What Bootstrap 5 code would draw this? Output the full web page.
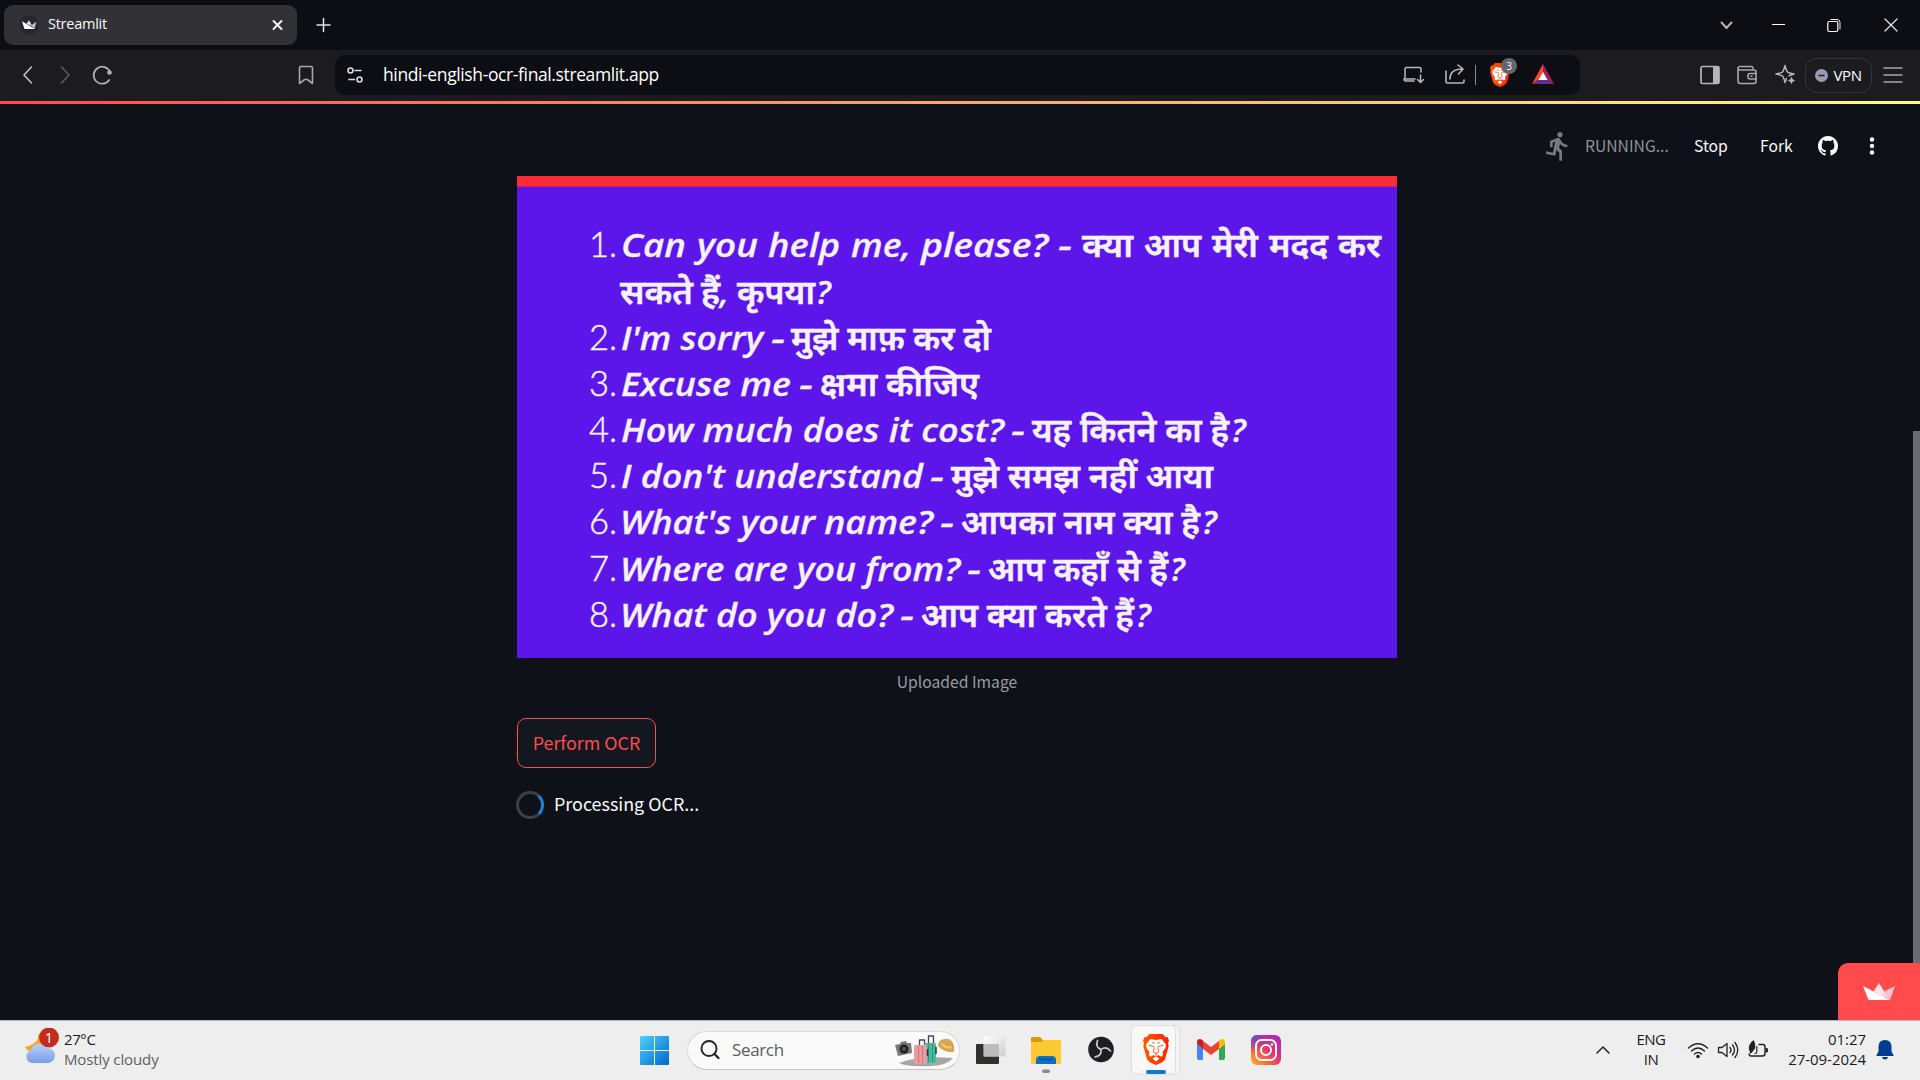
<!DOCTYPE html>
<html lang="en">
<head>
<meta charset="utf-8">
<title>Streamlit</title>
<link href="https://cdn.jsdelivr.net/npm/bootstrap@5.3.0/dist/css/bootstrap.min.css" rel="stylesheet">
<style>
html,body{height:100%;overflow:hidden}
body{background:#0e1117;color:#fafafa;font-family:"Noto Sans CJK SC","Noto Sans",sans-serif;width:1920px;height:1080px}
svg{display:block;flex:none}
.st{fill:none;stroke-linecap:round;stroke-linejoin:round}
.seg{font-family:"Open Sans","Noto Sans",sans-serif}
.tabstrip{height:50px;background:#0d0e13}
.tabitem{width:293px;height:40px;margin:5px 0 0 4px;background:#323135;border-radius:9px;padding:0 9px 0 15px;font-size:14.5px}
.tabname{margin-left:9px;margin-bottom:2px;letter-spacing:-.25px}
.winbtns{padding-right:19px;gap:33px}
.toolbar{height:51px;background:#1c1b20;padding-left:16px;padding-bottom:1px}
.urlbar{width:1245px;height:40px;background:#0d0e13;border-radius:10px;margin-left:17px;padding:0 25px 0 8px}
.urltext{font-size:17.5px;margin-left:16px;margin-bottom:2px;letter-spacing:-.38px;color:#fff}
.shield{margin-left:12px}
.countbadge{left:13px;top:-5px;width:16px;height:16px;border-radius:50%;background:#63646f;font-size:10px;line-height:16px}
.vpn{width:67px;height:35px;border:1px solid #35343b;border-radius:11px;margin-left:8px;font-size:15px;gap:5px}
.stripe{height:3px;background:linear-gradient(90deg,#ff4b4b,#fffd80)}
.appview{height:916px}
.apphead{height:72px;padding:12px 38px 0 0;font-size:15.7px;line-height:1}
.running{color:#8f939d;width:113px}
.block{width:880px;margin-left:517px}
.caption{font-size:15.7px;line-height:20px;color:#9a9ca1;margin-top:14px}
.ocrbtn{width:139px;height:50px;margin-top:26px;border:1px solid #ff4b4b;border-radius:9px;background:#131720;color:#ff4b4b;font-size:17.9px;padding:0 0 2px}
.ocrbtn:hover{border-color:#ff4b4b;color:#ff4b4b}
.spinrow{margin-top:22px;height:30px;font-size:17.9px;gap:10px}
.ring{width:28px;height:28px;border-radius:50%;border:3px solid #3d4048;border-right-color:#1c83e1;margin-left:-1px}
.scrollthumb{right:0;top:431px;width:7px;height:589px;background:#6b6c71}
.hostbadge{right:0;top:963px;width:82px;height:57px;background:#ff4b4b;border-top-left-radius:10px}
.taskbar{height:60px;background:#eee;border-top:1px solid #b9b9bb;color:#1b1b1b;font-size:15px;line-height:20px;padding-bottom:1px}
.weather{margin-left:24px;width:616px}
.traytxt{padding-bottom:2px}
.find{width:273px;height:39px;background:#fafafa;border:1px solid #dadada;border-bottom-color:#c4c4c4;border-radius:20px;margin-left:18px;padding:0 4px 0 12px;font-size:17px;color:#5c5c5c}
.tiles{margin-left:14px}
.hi{font-family:"Noto Sans Devanagari","Noto Sans",sans-serif;font-weight:600;font-size:33px;stroke:#f6f1ff;stroke-width:.5px}
.en{font-family:"Open Sans","Noto Sans",sans-serif;font-weight:600;font-style:italic;font-size:33px;stroke:#f6f1ff;stroke-width:.3px}
.no{font-family:Lato,sans-serif;font-weight:300;font-size:34.5px;stroke:#f6f1ff;stroke-width:.5px}
</style>
<script src="https://cdn.jsdelivr.net/npm/bootstrap@5.3.0/dist/js/bootstrap.bundle.min.js"></script>
</head>
<body class="d-flex flex-column position-relative">
<svg width="0" height="0" class="position-absolute">
 <defs>
  <linearGradient id="lg" x1="0" x2="1"><stop offset="0" stop-color="#ff5a00"/><stop offset="1" stop-color="#ff2000"/></linearGradient>
  <symbol id="lion" viewBox="0 0 26 31">
   <path fill="url(#lg)" d="M6.500 0h13l3 3.200 2-.2L26 6.600l-1 3 .7 2.400-3.800 13.500-3 3L13 31l-5.900-2.500-3-3L.3 12 1 9.600l-1-3L1.500 3l2 .2z"/>
   <path fill="#fff" d="M7.500 5l5.500 1 5.500-1 4.500 5.600-.5 3.400-3 4.300.7 2.700-2.200 1.800-2.500-1.700L13 22.500l-2.500-1.400L8 22.800 5.800 21l.7-2.700L3.500 14 3 10.600zM9.500 24.500l3.500-2 3.500 2-3.500 3z"/>
   <path class="st" stroke="#ff4310" stroke-width=".9" d="M6 11.500l4.500.7.700 1.700-1 4 2.800 1.600 2.800-1.600-1-4 .7-1.700 4.500-.7M13 19.500V22M9.500 8.700l2 .4M16.500 8.700l-2 .4"/>
  </symbol>
  <symbol id="crown" viewBox="0 0 32 17">
   <path fill="#fff" d="M0 3l27 14H5.500z"/><path fill="#ffe3e8" d="M16 0l8.500 13.500L21 14 10.500 8.500z"/><path fill="#ffc3cd" d="M32 3l-5 14-5-9z"/><path fill="#ffd5dc" d="M22 8l5 9-8-5z"/>
  </symbol>
 </defs>
</svg>

<!-- Tab strip -->
<header class="tabstrip d-flex flex-none seg">
 <div class="tabitem d-flex align-items-center">
  <svg width="20" height="20" viewBox="0 0 20 20"><circle cx="10" cy="10" r="9.800" fill="#262631"/><path fill="#fff" d="M3 6.300L16 14H5.500z"/><path fill="#e3e3e3" d="M10 5.300l3.500 6-6-2.500z"/><path fill="#bbb" d="M17.500 6.500L15.500 14 12 10.500z"/></svg>
  <span class="tabname">Streamlit</span>
  <svg class="ms-auto" width="20" height="20"><path class="st" stroke="#f4f4f4" stroke-width="1.900" d="M5.500 6l8 8m0-8l-8 8"/></svg>
 </div>
 <svg class="ms-3" width="20" height="50"><path class="st" stroke="#e4e4e6" stroke-width="1.500" d="M10.500 18.500v13M4 25h13"/></svg>
 <div class="winbtns ms-auto d-flex align-items-center">
  <svg width="24" height="24"><path class="st" stroke="#b5b5b8" stroke-width="2" d="M7.500 9.500l5 5.500 5-5.500"/></svg>
  <svg width="20" height="24"><path stroke="#fff" d="M1 11.500h13"/></svg>
  <svg width="24" height="24"><path class="st" stroke="#eee" d="M7 6.500h6a3 3 0 0 1 3 3V16"/><rect x="3.800" y="8.500" width="10" height="10" rx="1.500" fill="none" stroke="#fff" stroke-width="1.200"/></svg>
  <svg width="20" height="24"><path class="st" stroke="#e8e8e8" stroke-width="1.200" d="M4 6l12 12m0-12L4 18"/></svg>
 </div>
</header>

<!-- Address toolbar -->
<nav class="toolbar d-flex align-items-center seg" aria-label="Browser">
 <svg width="24" height="24"><path class="st" stroke="#c4c4c8" stroke-width="1.600" d="M15.500 4L8 12l7.500 8"/></svg>
 <svg width="24" height="24" style="margin-left:13px"><path class="st" stroke="#5a5a60" stroke-width="1.600" d="M8.500 4l7.500 8-7.500 8"/></svg>
 <svg width="24" height="24" style="margin-left:13px"><path class="st" stroke="#b2b2b6" stroke-width="1.700" d="M20 9a8.500 8.500 0 1 0-.8 8"/><circle cx="19.500" cy="9.500" r="2.300" fill="#b2b2b6"/></svg>
 <svg width="24" height="24" style="margin-left:180px"><path class="st" stroke="#a6a6ab" stroke-width="1.600" d="M5.500 5q0-1.500 1.500-1.500h10q1.500 0 1.500 1.500v15.500l-4.500-3.500q-2-1.500-4 0l-4.500 3.500z"/></svg>
 <div class="urlbar d-flex align-items-center">
  <svg width="24" height="24"><g class="st" stroke="#dcdce0" stroke-width="1.600"><circle cx="7.500" cy="7.500" r="2.500"/><path d="M12 7.500h6M6 16.500h5.500"/><circle cx="16.500" cy="16.500" r="2.500"/></g></svg>
  <span class="urltext">hindi-english-ocr-final.streamlit.app</span>
  <svg class="ms-auto" width="24" height="24"><path class="st" stroke="#b8b8bc" stroke-width="1.500" d="M20 9V6q0-1.500-1.500-1.500h-13Q4 4.500 4 6v10M13 18H4.500q-1.500 0-1.500-2h11M19.500 12v7.500m-3-3l3 3 3-3"/></svg>
  <svg width="24" height="24" style="margin-left:18px"><path class="st" stroke="#b8b8bc" stroke-width="1.600" d="M3 8v10.500Q3 20 4.500 20h15q1.500 0 1.500-1.500V17M7 16c0-6 4-10 12.500-10M15 2l5 4-4.500 5"/></svg>
  <svg width="1" height="20" style="margin-left:8px"><path stroke="#8c8c90" d="M.5 0v20"/></svg>
  <span class="shield position-relative"><svg width="22" height="24"><use href="#lion" x="2" y="0" width="20" height="24"/></svg><span class="countbadge position-absolute text-center">3</span></span>
  <svg width="24" height="24" style="margin-left:21px"><path fill="#ff4724" d="M12 1v8.500L7.500 17 1 21z"/><path fill="#9e1f63" d="M12 1l11 20-6.500-4L12 9.500z"/><path fill="#662d91" d="M1 21l6.500-4h9l6.500 4z"/><path fill="#fff" d="M12 9l4.600 8H7.400z"/></svg>
 </div>
 <svg width="24" height="24" style="margin-left:118px"><rect x="3" y="3.500" width="18" height="17" rx="1.500" class="st" stroke="#b5b5b9" stroke-width="1.700"/><path fill="#b5b5b9" d="M15 3h6v18h-6z"/></svg>
 <svg width="24" height="24" style="margin-left:13px"><g class="st" stroke="#a8a8ad" stroke-width="1.600"><path d="M3 5.500V18q0 2.500 2.500 2.500H19q2 0 2-2V9q0-2-2-2H5Q3 7 3 5.300q0-1.800 2-1.800h11q2 0 2 2"/><path d="M21 10.500h-6q-2 0-2 2v1.500q0 2 2 2h6M16 13.300h1"/></g></svg>
 <svg width="24" height="24" style="margin-left:14px"><path class="st" stroke="#b5b5b9" stroke-width="1.500" d="M12 2.500q1.500 5.500 2.500 6.500t6.500 2q-4 1-5 1.800M12 2.500Q10.500 8 9.500 9T3 11q5.500 1 6.500 2T12 19.500q.8-2 1.300-4"/><path fill="#b5b5b9" d="M18.500 13.500q.7 3.300 4 4-3.300.7-4 4-.7-3.300-4-4 3.300-.7 4-4z"/></svg>
 <div class="vpn d-flex align-items-center justify-content-center text-white"><svg width="13" height="13"><circle cx="6.500" cy="6.500" r="6.500" fill="#9a9cb5"/><path stroke="#1c1b20" stroke-width="1.500" d="M3.500 6.500h6"/></svg><span style="letter-spacing:-.4px">VPN</span></div>
 <svg width="24" height="24" style="margin-left:9px"><path class="st" stroke="#a6a6ab" stroke-width="1.500" d="M3 5h18M3 12h18M3 19h18"/></svg>
</nav>
<div class="stripe"></div>

<!-- Application -->
<main class="appview">
 <div class="apphead d-flex align-items-center justify-content-end">
  <svg width="32" height="32" viewBox="0 0 24 24" style="margin-right:-1px"><path fill="#77797e" d="M13.490 5.480c1.100 0 2-.9 2-2s-.9-2-2-2-2 .9-2 2 .9 2 2 2zm-3.600 13.900l1-4.400 2.100 2v6h2v-7.500l-2.100-2 .6-3c1.300 1.500 3.300 2.500 5.500 2.500v-2c-1.900 0-3.500-1-4.300-2.400l-1-1.600c-.4-.6-1-1-1.700-1-.3 0-.5.1-.8.1l-5.200 2.200v4.700h2v-3.400l1.800-.7-1.600 8.100-4.900-1-.4 2 7 1.400z"/></svg>
  <span class="running ms-2 ps-1">RUNNING...</span>
  <span style="width:66px">Stop</span>
  <span style="width:58px">Fork</span>
  <svg width="20" height="20" viewBox="0 0 16 16"><path fill="#fff" d="M8 0C3.580 0 0 3.580 0 8c0 3.540 2.290 6.530 5.470 7.590.4.070.55-.17.55-.38 0-.19-.01-.82-.01-1.490-2.010.37-2.530-.49-2.690-.94-.09-.23-.48-.94-.82-1.130-.28-.15-.68-.52-.01-.53.630-.01 1.080.58 1.230.82.720 1.210 1.870.87 2.330.66.070-.52.280-.87.510-1.070-1.780-.2-3.640-.89-3.640-3.950 0-.87.310-1.590.82-2.150-.08-.2-.36-1.020.08-2.120 0 0 .67-.21 2.200.82.640-.18 1.320-.27 2-.27s1.360.09 2 .27c1.530-1.040 2.200-.82 2.200-.82.440 1.100.16 1.920.08 2.120.51.56.82 1.270.82 2.150 0 3.070-1.870 3.750-3.650 3.950.29.250.54.730.54 1.480 0 1.070-.01 1.930-.01 2.200 0 .21.150.46.550.38A8.010 8.010 0 0 0 16 8c0-4.420-3.580-8-8-8z"/></svg>
  <svg width="20" height="24" style="margin-left:24px"><g fill="#fff"><circle cx="10" cy="5.500" r="2.200"/><circle cx="10" cy="12" r="2.200"/><circle cx="10" cy="18.500" r="2.200"/></g></svg>
 </div>
 <div class="block">
  <svg width="880" height="482" viewBox="517 176 880 482" role="img" aria-label="Uploaded Image">
   <rect x="517" y="176" width="880" height="482" fill="#5c16e9"/><rect x="517" y="176" width="880" height="10.700" fill="#fa2a37"/>
   <g fill="#f6f1ff">
    <g class="no" text-anchor="end"><text x="617" y="257">1.</text><text x="617" y="349.500">2.</text><text x="617" y="396">3.</text><text x="617" y="442">4.</text><text x="617" y="488">5.</text><text x="617" y="534">6.</text><text x="617" y="580.500">7.</text><text x="617" y="626.500">8.</text></g>
    <g class="en">
     <text x="621" y="257" textLength="65" lengthAdjust="spacingAndGlyphs">Can</text><text x="697" y="257" textLength="61" lengthAdjust="spacingAndGlyphs">you</text><text x="768" y="257" textLength="72" lengthAdjust="spacingAndGlyphs">help</text><text x="851" y="257" textLength="60" lengthAdjust="spacingAndGlyphs">me,</text><text x="921" y="257" textLength="127" lengthAdjust="spacingAndGlyphs">please?</text><text x="1058" y="257" textLength="14" lengthAdjust="spacingAndGlyphs">-</text>
     <text x="720" y="303.500">,</text><text x="816" y="303.500">?</text>
     <text x="621" y="349.500" textLength="142" lengthAdjust="spacingAndGlyphs">I'm sorry</text><text x="771" y="349.500" textLength="14" lengthAdjust="spacingAndGlyphs">-</text>
     <text x="621" y="396" textLength="170" lengthAdjust="spacingAndGlyphs">Excuse me</text><text x="799" y="396" textLength="14" lengthAdjust="spacingAndGlyphs">-</text>
     <text x="621" y="442" textLength="383" lengthAdjust="spacingAndGlyphs">How much does it cost?</text><text x="1011" y="442" textLength="14" lengthAdjust="spacingAndGlyphs">-</text><text x="1231" y="442">?</text>
     <text x="621" y="488" textLength="302" lengthAdjust="spacingAndGlyphs">I don't understand</text><text x="930" y="488" textLength="14" lengthAdjust="spacingAndGlyphs">-</text>
     <text x="620" y="534" textLength="313" lengthAdjust="spacingAndGlyphs">What's your name?</text><text x="940" y="534" textLength="14" lengthAdjust="spacingAndGlyphs">-</text><text x="1202" y="534">?</text>
     <text x="620" y="580.500" textLength="340" lengthAdjust="spacingAndGlyphs">Where are you from?</text><text x="967" y="580.500" textLength="14" lengthAdjust="spacingAndGlyphs">-</text><text x="1170" y="580.500">?</text>
     <text x="620" y="626.500" textLength="273" lengthAdjust="spacingAndGlyphs">What do you do?</text><text x="900" y="626.500" textLength="14" lengthAdjust="spacingAndGlyphs">-</text><text x="1136" y="626.500">?</text>
    </g>
    <g class="hi">
     <text x="1082" y="257" textLength="51" lengthAdjust="spacingAndGlyphs">क्या</text><text x="1144" y="257" textLength="57" lengthAdjust="spacingAndGlyphs">आप</text><text x="1212" y="257" textLength="46" lengthAdjust="spacingAndGlyphs">मेरी</text><text x="1269" y="257" textLength="59" lengthAdjust="spacingAndGlyphs">मदद</text><text x="1338" y="257" textLength="43" lengthAdjust="spacingAndGlyphs">कर</text>
     <text x="620" y="303.500" textLength="73" lengthAdjust="spacingAndGlyphs">सकते</text><text x="701" y="303.500" textLength="19" lengthAdjust="spacingAndGlyphs">हैं</text><text x="737" y="303.500" textLength="78" lengthAdjust="spacingAndGlyphs">कृपया</text>
     <text x="791" y="349.500" textLength="200" lengthAdjust="spacingAndGlyphs">मुझे माफ़ कर दो</text>
     <text x="820" y="396" textLength="159" lengthAdjust="spacingAndGlyphs">क्षमा कीजिए</text>
     <text x="1032" y="442" textLength="197" lengthAdjust="spacingAndGlyphs">यह कितने का है</text>
     <text x="951" y="488" textLength="262" lengthAdjust="spacingAndGlyphs">मुझे समझ नहीं आया</text>
     <text x="961" y="534" textLength="239" lengthAdjust="spacingAndGlyphs">आपका नाम क्या है</text>
     <text x="988" y="580.500" textLength="180" lengthAdjust="spacingAndGlyphs">आप कहाँ से हैं</text>
     <text x="921" y="626.500" textLength="213" lengthAdjust="spacingAndGlyphs">आप क्या करते हैं</text>
    </g>
   </g>
  </svg>
  <div class="caption text-center">Uploaded Image</div>
  <button class="ocrbtn btn d-block">Perform OCR</button>
  <div class="spinrow d-flex align-items-center"><span class="ring"></span><span class="pb-1">Processing OCR...</span></div>
 </div>
</main>
<div class="scrollthumb position-absolute"></div>
<div class="hostbadge position-absolute d-flex justify-content-center align-items-center"><svg width="32" height="17"><use href="#crown"/></svg></div>

<!-- Taskbar -->
<footer class="taskbar d-flex align-items-center seg position-relative">
 <div class="weather d-flex align-items-center">
  <svg width="36" height="44" viewBox="24 1028 36 44"><defs><linearGradient id="cl" x2="0" y2="1"><stop stop-color="#b5d0fa"/><stop offset="1" stop-color="#7a9fe6"/></linearGradient></defs><path fill="#f5a623" d="M38 1034q2 9-13 13 5 8 14 3t4-13z"/><path fill="url(#cl)" d="M32 1063a7 6.500 0 0 1-1-12.500 8.500 8 0 0 1 16-2.500 7.500 7.500 0 0 1 1 15z"/><circle cx="49" cy="1037.500" r="10" fill="#c42b1c"/><text x="49" y="1043" text-anchor="middle" font-size="14.500" fill="#fff">1</text></svg>
  <div class="traytxt" style="margin-left:4px"><div style="letter-spacing:-.4px">27°C</div><div style="color:#606060;letter-spacing:-.12px">Mostly cloudy</div></div>
 </div>
 <svg width="29" height="29"><defs><linearGradient id="wn" x2="1" y2="1"><stop stop-color="#4fd0ff"/><stop offset="1" stop-color="#0067c8"/></linearGradient></defs><path fill="url(#wn)" d="M1 0h13v14H0V1q0-1 1-1zm14 0h13q1 0 1 1v13H15zM0 15h14v14H1q-1 0-1-1zm15 0h14v13q0 1-1 1H15z"/></svg>
 <div class="find d-flex align-items-center">
  <svg width="22" height="22"><circle cx="9" cy="9.500" r="7.500" class="st" stroke="#222" stroke-width="1.900"/><path class="st" stroke="#222" stroke-width="2.300" d="M14.500 15l4 4"/></svg>
  <span style="margin-left:10px;letter-spacing:-.35px">Search</span>
  <svg class="ms-auto" width="62" height="34" viewBox="893 1034 62 34"><path fill="#a9a5a5" d="M899 1064q20-8 54-5-5 7-22 8-23 1-32-3z"/><path fill="#777" d="M895 1046l5-1 1-2 5-1 1 2 4 0 1 10-14 3z"/><circle cx="904" cy="1050" r="4.500" fill="#222"/><circle cx="904" cy="1050" r="2" fill="#555"/><path class="st" stroke="#444655" stroke-width="1.300" d="M919.500 1046v-5h5v5M928.500 1044v-7h5v7"/><rect x="924" y="1044" width="12" height="20" rx="1.500" fill="#45bf9b"/><path stroke="#2c9477" d="M928.500 1045v18M932.500 1045v18"/><rect x="914" y="1046" width="13" height="19" rx="1.500" fill="#ea9c9e"/><path stroke="#c97578" d="M918.500 1047v17M922.500 1047v17"/><path stroke="#333" stroke-width="1.500" d="M927.500 1050v7M936 1048v7"/><path fill="#d5a35c" d="M938 1047q0-6 6-7t9 4q3 10-1 9-9 0-14-6z"/><path class="st" stroke="#f2d045" stroke-width="2" d="M942 1045q5 5 9 3"/></svg>
 </div>
 <div class="tiles d-flex align-items-center">
  <svg width="34" height="46" viewBox="974 1027 34 46"><defs><linearGradient id="tv" x2="1" y2="1"><stop stop-color="#fff"/><stop offset="1" stop-color="#ccc"/></linearGradient></defs><rect x="976" y="1044" width="23" height="20" rx="1" fill="#30312f"/><rect x="983.500" y="1036.500" width="22" height="20" rx="1" fill="url(#tv)" opacity=".9"/><path fill="#bcbcbc" d="M984 1044h15v12.500h-15z"/></svg>
  <svg width="34" height="46" viewBox="1029 1027 34 46" style="margin-left:21px"><path fill="#d99a00" d="M1031 1038q0-1 1-1h8l3 3h17v5h-29z"/><path fill="#ffc933" d="M1031 1042h10l3-2h16q1 0 1 1v22q0 1-1 1h-28q-1 0-1-1z"/><path fill="#0d70c5" d="M1036 1064v-4q0-4 4-4h12q4 0 4 4v4z"/><path stroke="#06508f" stroke-width="1.300" d="M1039 1059.500h13"/><rect x="1042" y="1069.500" width="8" height="3.500" rx="1.700" fill="#8a8a8a"/></svg>
  <svg width="28" height="46" viewBox="1087 1027 28 46" style="margin-left:24px"><circle cx="1101" cy="1049.500" r="12.800" fill="#1e1e22"/><g class="st" stroke="#c8c8cc" stroke-width="1.700"><path d="M1101 1049.500q-6-2.500-3.500-9"/><path d="M1101 1049.500q-6-2.500-3.500-9" transform="rotate(120 1101 1049.500)"/><path d="M1101 1049.500q-6-2.500-3.500-9" transform="rotate(240 1101 1049.500)"/></g></svg>
  <svg width="50" height="50" viewBox="1131 1025 50 50" style="margin-left:16px"><rect x="1140.500" y="1025.500" width="39.500" height="48.500" rx="5" fill="#f4f4f4" stroke="#dadada"/><rect x="1131.500" y="1025.500" width="44" height="48.500" rx="5" fill="#f8f8f8" stroke="#dedede"/><use href="#lion" x="1143" y="1034" width="26" height="31"/><rect x="1146" y="1070" width="20" height="4" rx="2" fill="#0f78d4"/></svg>
  <svg width="28" height="46" viewBox="1197 1027 28 46" style="margin-left:16px"><path fill="#4285f4" d="M1197 1044l6 4.500V1060h-4q-2 0-2-2z"/><path fill="#34a853" d="M1225 1044l-6 4.500V1060h4q2 0 2-2z"/><path fill="#ea4335" d="M1203 1041l8 6 8-6v8l-8 6-8-6z"/><path fill="#c5221f" d="M1197 1044v-2q0-3 3-3 1.500 0 3 1.500v8.500z"/><path fill="#fbbc04" d="M1225 1044v-2q0-3-3-3-1.500 0-3 1.500v8.500z"/></svg>
  <svg width="30" height="46" viewBox="1251 1027 30 46" style="margin-left:26px"><defs><linearGradient id="ig" x1="0" y1="1" x2=".9" y2="0"><stop stop-color="#ffb52e"/><stop offset=".3" stop-color="#fb6a35"/><stop offset=".6" stop-color="#e32d77"/><stop offset="1" stop-color="#a72bc4"/></linearGradient><radialGradient id="ib" cx="0" cy="0" r=".6"><stop stop-color="#3d63e0"/><stop offset="1" stop-color="#7a30d0" stop-opacity="0"/></radialGradient></defs><rect x="1251" y="1035" width="30" height="30" rx="6" fill="url(#ig)"/><rect x="1251" y="1035" width="30" height="30" rx="6" fill="url(#ib)"/><g class="st" stroke="#fff" stroke-width="2"><rect x="1256" y="1040" width="20" height="20" rx="5.500"/><circle cx="1266" cy="1050" r="5"/></g><circle cx="1272" cy="1044.500" r="1.300" fill="#fff"/></svg>
 </div>
 <div class="ms-auto d-flex align-items-center" style="padding-right:25px">
  <svg width="16" height="16"><path class="st" stroke="#222" stroke-width="1.500" d="M3 11l6-6 6 6"/></svg>
  <div class="traytxt text-center" style="width:34px;margin-left:24px;letter-spacing:-.5px">ENG<br>IN</div>
  <svg width="22" height="20" style="margin-left:19px"><g class="st" stroke="#222" stroke-width="1.400"><path d="M1.500 8q9.500-8.500 19 0M4.500 11q6.500-6 13 0M7.500 14q3.500-3 7 0"/></g><circle cx="11" cy="16.500" r="1.800" fill="#222"/></svg>
  <svg width="22" height="20" style="margin-left:8px"><g class="st" stroke="#222" stroke-width="1.300"><path d="M1.500 7.500v5h3.500l5 4V3.500l-5 4zM13 7.500q2 2.500 0 5M15.500 5q4 5 0 10M18 2.500q5.500 7.500 0 15"/></g></svg>
  <svg width="22" height="20" style="margin-left:8px"><path class="st" stroke="#222" stroke-width="1.400" d="M12 4.500h4q2 0 2 2.500v6.500q0 2.500-2.500 2.500H4q-1.500 0-2-1.500"/><path fill="#222" d="M18.500 8h1.500q1 0 1 2.200t-1 2.200h-1.500zM6.500 0q2.500 4 1.500 8.500L5 12.500 2 14.500l1-2.500Q-.5 6 6.500 0z"/><path class="st" stroke="#222" stroke-width="1.200" d="M9.800 6.500v5.500q0 1.500-2 1.500"/></svg>
  <div class="traytxt text-end" style="width:90px;margin-left:7px;letter-spacing:-.05px">01:27<br>27-09-2024</div>
  <svg width="20" height="22" style="margin-left:9px"><path fill="#003e92" d="M10 1q6.500 0 6.500 7v4.500l2 3.500v1h-17v-1l2-3.500V8Q3.500 1 10 1zM7 18h6q-.5 2.500-3 2.500T7 18z"/></svg>
 </div>
</footer>
</body>
</html>
